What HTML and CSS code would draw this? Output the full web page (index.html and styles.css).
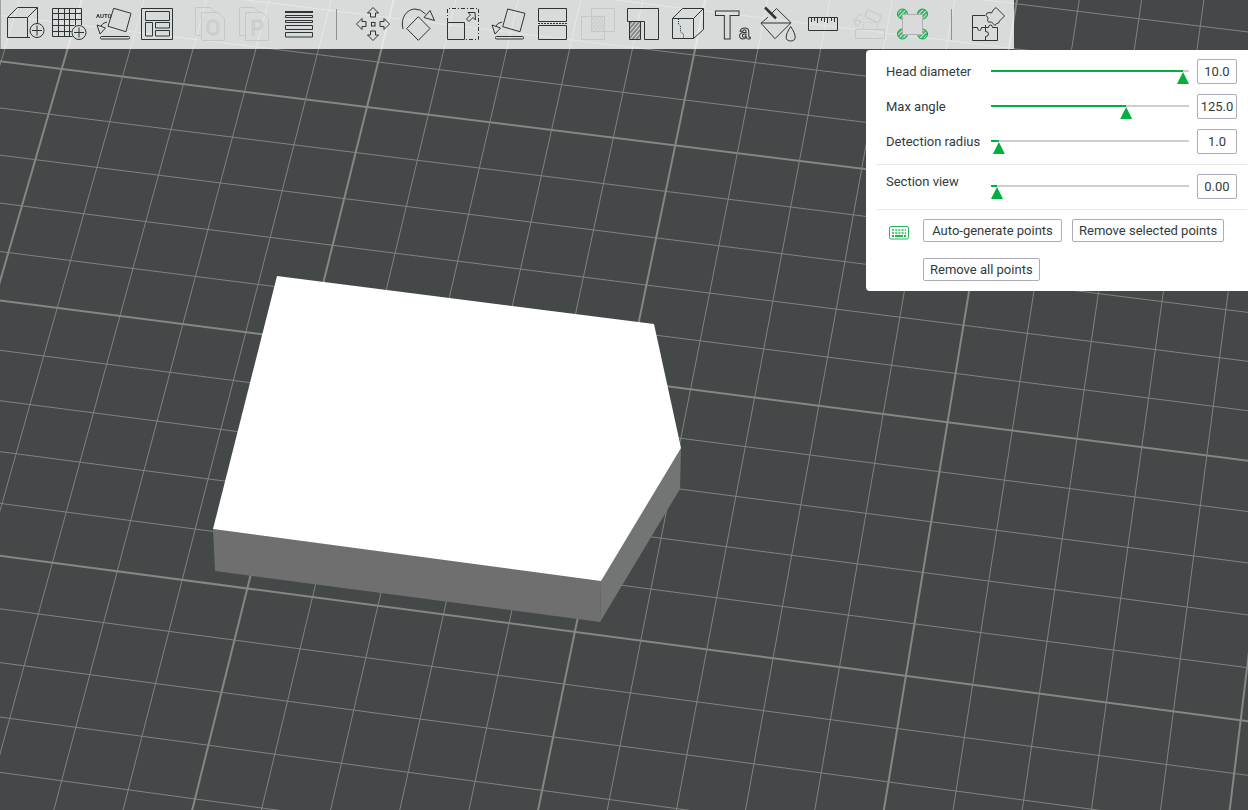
FILE: index.html
```html
<!DOCTYPE html>
<html lang="en">
<head>
  <meta charset="UTF-8">
  <meta name="viewport" content="width=device-width, initial-scale=1.0">
  <title>Prepare</title>
  <link rel="stylesheet" href="styles.css">
</head>
<body>
  <svg class="scene" viewBox="0 0 1248 810" preserveAspectRatio="xMidYMid slice" aria-hidden="true">
    <g id="bed"></g>
    <polygon class="face-front" points="213,529 601,580 600,622 215,571"/>
    <polygon class="face-side" points="681,448 680,489 600,622 601,580"/>
    <polygon class="face-top" points="277,276 654,324 681,448 601,581 213,529"/>
  </svg>

  <nav class="toolbar">
    <div class="group">
      <button class="tool" title="Add"><svg viewBox="0 0 44 48"><path d="M27 37.500h-22.500v-20h20v20M4.500 17.500l10-10h20v16M24.500 17.500l10-10"/><circle cx="34" cy="30.500" r="7"/><path d="M34 25.500v10M29 30.500h10"/></svg></button>
      <button class="tool" title="Add plate"><svg viewBox="0 0 44 48"><path d="M34.500 25V8.500h-29v28h20M5.500 13.500h29M5.500 19.500h29M5.500 25.500h22M5.500 31.500h19M11.500 8.500v28M17.500 8.500v28M22.500 8.500v28M28.500 8.500v17"/><circle cx="32" cy="32.500" r="7"/><path d="M32 27.500v10M27 32.500h10"/></svg></button>
      <button class="tool" title="Auto orient"><svg viewBox="0 0 44 48"><text class="auto" x="5" y="18">AUTO</text><path d="M22.700 8.300L40 13.300 35 31.700 17 26.300zM16 22q-5 1-6 4M6 25l8.500 3L9 34z"/><rect x="9.500" y="36.500" width="29" height="2.500" rx="1"/></svg></button>
      <button class="tool" title="Arrange"><svg viewBox="0 0 44 48"><path d="M6.500 8.500h31v31h-31zM10.500 11.500h24v9h-24zM10.500 22.500h7v13.500h-7zM20.500 22.500h14v5.500h-14zM20.500 30.500h14v5.500h-14z"/></svg></button>
    </div>
    <div class="group">
      <button class="tool" title="Split to objects" disabled><svg viewBox="0 0 44 48"><path d="M13.500 35.500h-6v-28h15l5 5M13.500 12.500h17l6 6v22h-23z"/><text class="letter" x="25" y="35">O</text></svg></button>
      <button class="tool" title="Split to parts" disabled><svg viewBox="0 0 44 48"><path d="M13.500 35.500h-6v-28h15l5 5M13.500 12.500h17l6 6v22h-23z"/><text class="letter" x="25" y="35">P</text></svg></button>
      <button class="tool" title="Variable layer height"><svg viewBox="0 0 44 48"><path d="M9 11.500h28M9 12.500h28M9.500 15.500h27v2h-27zM9.500 20.500h27v2h-27zM9.500 25.500h27v4h-27zM9.500 32.500h27v4.500h-27z"/></svg></button>
    </div>
    <span class="separator"></span>
    <div class="group tight">
      <button class="tool" title="Move"><svg viewBox="0 0 44 48"><path id="arrow" d="M22 7.500l5.500 5.500h-3v4h-5v-4h-3z"/><use href="#arrow" transform="rotate(90 22 24)"/><use href="#arrow" transform="rotate(180 22 24)"/><use href="#arrow" transform="rotate(270 22 24)"/><rect x="20.500" y="22.500" width="3.500" height="3.500"/></svg></button>
      <button class="tool" title="Rotate"><svg viewBox="0 0 44 48"><path d="M22.300 16.700L34 28.500 22.300 40.300 10.700 28.500zM7 29C4 18 11 9 19 9q6 0 10.500 5M28 17.500l6-7 4.500 10z"/></svg></button>
      <button class="tool" title="Scale"><svg viewBox="0 0 44 48"><path stroke-dasharray="4 2 1 2" d="M6.500 22V8.500h31v31H24"/><path d="M6.500 22.500h17v17h-17zM34 12.500h-7l2.500 2.500-4 4 2.500 2.500 4-4 2.500 2.500z"/></svg></button>
      <button class="tool" title="Lay on face"><svg viewBox="0 0 44 48"><path d="M21.700 9L39 13.300 34 31.700 16.700 26.700zM16 22q-5 1-6 4M6 25l8.500 3L9 34z"/><rect x="9.500" y="36.500" width="28" height="2.500" rx="1"/></svg></button>
      <button class="tool" title="Cut"><svg viewBox="0 0 44 48"><path d="M7.500 8.500h28v13h-28zM7.500 25.500h28v14h-28z"/><path stroke-dasharray="2 1" d="M7 23.500h29"/></svg></button>
      <button class="tool" title="Mesh boolean" disabled><svg viewBox="0 0 44 48"><path d="M5.500 16.500h23v23h-23zM15.500 8.500h23v23h-23z"/><path fill="url(#hatch-light)" d="M15.500 16.500h13v15h-13z"/></svg></button>
      <button class="tool" title="Support painting"><svg viewBox="0 0 44 48"><path d="M6.500 8.500h31v31h-14v-18h-17z"/><path fill="url(#hatch)" d="M8.500 21.500h11v18h-11z"/></svg></button>
      <button class="tool" title="Seam painting"><svg viewBox="0 0 44 48"><path d="M6.500 18.500h21v20h-21zl10-10h21v21l-10 9M27.500 18.500l10-10"/><path stroke-dasharray="1 1" d="M12.500 19v5l2 2v6l3 2v5"/></svg></button>
      <button class="tool" title="Text"><svg viewBox="0 0 44 48"><text class="big-t" x="4" y="39">T</text><text class="small-a" x="28" y="39">a</text></svg></button>
      <button class="tool" title="Color painting"><svg viewBox="0 0 44 48"><path d="M15 14l5.500-5.500L35 22.700 19 38.700 5 23.200l7-6M5 23h29.500M34.700 26.500c-6 9-6 14.500 0 14.500s6-5.500 0-14.500z"/><path stroke-width="2.500" d="M9 7.500l11 11"/></svg></button>
      <button class="tool" title="Measure"><svg viewBox="0 0 44 48"><path d="M7.500 17.500h29v13h-29zM10.500 18v4M13.500 18v3M16.500 18v5M20.500 18v3M23.500 18v4M26.500 18v5M30.500 18v3M33.500 18v4"/></svg></button>
      <button class="tool" title="Assemble" disabled><svg viewBox="0 0 44 48"><path d="M9.500 29.500h29v9h-29zM21.500 9.500l14 6.500-3 7-13.500-6.500zM17 14q-6 1-7 5M7.500 19.500l8 2-5 5z"/><path stroke-dasharray="1 1" d="M17.500 29v-6.500h14V29"/></svg></button>
      <button class="tool" title="Brim ears"><svg viewBox="0 0 44 48"><g class="ears"><circle cx="11.500" cy="14" r="5"/><circle cx="31.500" cy="14" r="5"/><circle cx="11.500" cy="34" r="5"/><circle cx="31.500" cy="34" r="5"/></g><rect class="ear-plate" x="11.500" y="14.500" width="20" height="20"/></svg></button>
    </div>
    <span class="separator"></span>
    <div class="group">
      <button class="tool" title="Assembly view"><svg viewBox="0 0 44 48"><path d="M19 15.500H6.500v25h25v-13h-5q0-2.500-2-2.500t-2 2.500h-3q0 0 0-2.500M6.500 27.500h5q0 3 2 3t2-3h4v4q3 0 3 2.500t-3 2.500v4"/><path d="M30 7.500L38.500 16l-5 5q-.500 3-3 2.500L29 25.500 25.500 22q-4 1-4-1.500 1-2 0-3.500L20 15.500q0-3 3-3l2.500.500q1-3 4.500-5.500z"/></svg></button>
    </div>
  </nav>

  <section class="panel">
    <div class="row">
      <label for="head">Head diameter</label>
      <input type="range" id="head" min="0" max="10" step="0.1" value="10">
      <input type="text" class="value" value="10.0" aria-label="Head diameter value">
    </div>
    <div class="row">
      <label for="angle">Max angle</label>
      <input type="range" id="angle" min="0" max="180" value="125">
      <input type="text" class="value" value="125.0" aria-label="Max angle value">
    </div>
    <div class="row">
      <label for="radius">Detection radius</label>
      <input type="range" id="radius" min="0" max="100" value="1">
      <input type="text" class="value" value="1.0" aria-label="Detection radius value">
    </div>
    <hr>
    <div class="row section-view">
      <label for="section">Section view</label>
      <input type="range" id="section" min="0" max="1" step="0.01" value="0">
      <input type="text" class="value" value="0.00" aria-label="Section view value">
    </div>
    <hr>
    <div class="actions">
      <button class="keys" title="Shortcuts">
        <svg viewBox="0 0 20 14"><rect x=".500" y=".500" width="19" height="12.500" rx="1.500"/><path stroke-width="1.500" stroke-dasharray="2 1.200" d="M3 4h14M3 7h14"/><path stroke-width="2" d="M3 10h2M6 10h8M15 10h2"/></svg>
      </button>
      <div class="buttons">
        <button class="btn wide">Auto-generate points</button>
        <button class="btn">Remove selected points</button>
        <button class="btn">Remove all points</button>
      </div>
    </div>
  </section>

  <svg class="defs" aria-hidden="true">
    <defs>
      <pattern id="hatch" width="3" height="3" patternUnits="userSpaceOnUse" patternTransform="rotate(40)"><path stroke="#2b3537" d="M1 0v3"/></pattern>
      <pattern id="hatch-light" width="3" height="3" patternUnits="userSpaceOnUse" patternTransform="rotate(40)"><path stroke="#c4c4c4" d="M1 0v3"/></pattern>
      <pattern id="hatch-green" width="3" height="3" patternUnits="userSpaceOnUse" patternTransform="rotate(45)"><path stroke="#00ae42" stroke-width="1.500" d="M1 0v3"/></pattern>
    </defs>
  </svg>

  <script>
    // bed cell (u, v) -> screen point, as seen by the camera
    function project(u, v) {
      const w = 1 - 0.001 * u - 0.006 * v;
      const x = (60.68 * u - 13.39 * v + 61.7) / w;
      const y = (7.49 * u + 44.38 * v + 69) / w;
      return [x.toFixed(1), y.toFixed(1)];
    }

    const bed = document.getElementById('bed');

    function addLine(from, to, bold) {
      const line = document.createElementNS('http://www.w3.org/2000/svg', 'path');
      line.setAttribute('d', `M${from}L${to}`);
      line.setAttribute('class', bold ? 'grid bold' : 'grid');
      bed.appendChild(line);
    }

    for (let i = -8; i <= 30; i++) {
      addLine(project(i, -8), project(i, 22), i % 5 === 0);
      if (i <= 22) addLine(project(-8, i), project(30, i), i % 5 === 0);
    }

    // green part of each slider
    document.querySelectorAll('input[type=range]').forEach((slider) => {
      const paint = () => {
        slider.style.setProperty('--part', (slider.value - slider.min) / (slider.max - slider.min));
      };
      slider.addEventListener('input', paint);
      paint();
    });
  </script>
</body>
</html>
```
FILE: styles.css
```css
html, body {
  margin: 0;
  height: 100%;
  overflow: hidden;
  background: #444848;
  color: #323a3d;
  font-family: Roboto, "Noto Sans", sans-serif;
  font-size: 13px;
}

button, input {
  font: inherit;
  color: inherit;
  margin: 0;
  box-sizing: border-box;
}

.scene {
  position: absolute;
  top: 0;
  left: 0;
  width: 100%;
  height: 100%;
}

.grid {
  stroke: #7f8381;
  stroke-width: 1;
}

.grid.bold {
  stroke: #848882;
  stroke-width: 2;
}

.face-top { fill: #fff; }
.face-front { fill: #6f6f6f; }
.face-side { fill: #737574; }

.toolbar {
  position: relative;
  display: inline-flex;
  align-items: center;
  height: 49px;
  padding: 0 4px 1px 2px;
  box-sizing: border-box;
  border-left: 1px solid #a0a3a2;
  background: rgba(255, 255, 255, 0.8);
  will-change: transform;
}

.group {
  display: flex;
}

.group + .group {
  margin-left: 9px;
}

.tight {
  gap: 1px;
}

.separator {
  width: 1px;
  height: 31px;
  margin: 0 14px 0 16px;
  background: #8d9192;
}

.tool {
  width: 44px;
  height: 48px;
  padding: 0;
  border: 0;
  background: none;
}

.tool svg {
  display: block;
  width: 44px;
  height: 48px;
  fill: none;
  stroke: #2b3537;
  stroke-width: 1;
}

.tool:disabled svg {
  stroke: #c6c7c7;
}

.auto {
  fill: #2b3537;
  stroke: none;
  font-family: Roboto, sans-serif;
  font-size: 6px;
  font-weight: bold;
}

.letter {
  font-family: Roboto, sans-serif;
  font-size: 21px;
  text-anchor: middle;
}

.big-t {
  font-family: "Liberation Sans", sans-serif;
  font-size: 40px;
  font-weight: bold;
}

.small-a {
  font-family: "Liberation Sans", sans-serif;
  font-size: 20px;
  font-weight: bold;
}

.ears {
  fill: url(#hatch-green);
  stroke: #00ae42;
}

.ear-plate {
  fill: #dadada;
  stroke: #b0b2b2;
}

.panel {
  position: absolute;
  top: 50px;
  right: 0;
  width: 382px;
  padding: 9px 0 10px 10px;
  box-sizing: border-box;
  border-radius: 4px 0 0 4px;
  background: #fff;
}

.row {
  display: grid;
  grid-template-columns: 105px 1fr 40px;
  align-items: center;
  margin-bottom: 10px;
  padding: 0 11px 0 10px;
}

.row label {
  line-height: 16px;
  white-space: nowrap;
}

.section-view label {
  align-self: start;
}

.panel hr {
  height: 1px;
  margin: 0 1px 9px 0;
  border: 0;
  background: #e9e9e9;
}

.value {
  width: 40px;
  height: 25px;
  padding: 0;
  border: 1px solid #acacb8;
  border-radius: 2px;
  text-align: center;
  background: #fff;
}

input[type=range] {
  appearance: none;
  align-self: start;
  width: auto;
  height: 24px;
  margin-right: 8px;
  background: none;
}

input[type=range]::-webkit-slider-runnable-track {
  height: 2px;
  background: linear-gradient(#00ae42, #00ae42) no-repeat #cecece;
  background-size: calc(6px + var(--part) * (100% - 12px)) 100%;
}

input[type=range]::-webkit-slider-thumb {
  appearance: none;
  width: 12px;
  height: 12px;
  margin-top: 2px;
  background: #00ae42;
  clip-path: polygon(50% 0, 100% 100%, 0 100%);
}

.actions {
  display: flex;
  align-items: flex-start;
  padding: 0 11px 0 13px;
}

.keys {
  width: 20px;
  height: 14px;
  margin: 7px 14px 0 0;
  padding: 0;
  border: 0;
  background: none;
}

.keys svg {
  display: block;
  width: 20px;
  height: 14px;
  fill: none;
  stroke: #27b45c;
}

.buttons {
  display: flex;
  flex-wrap: wrap;
  gap: 16px 10px;
}

.btn {
  height: 23px;
  min-width: 116px;
  padding: 0 6px;
  border: 1px solid #acacb8;
  border-radius: 2px;
  background: #fff;
  line-height: 20px;
}

.btn.wide {
  min-width: 139px;
}

.defs {
  position: absolute;
  width: 0;
  height: 0;
}
```
